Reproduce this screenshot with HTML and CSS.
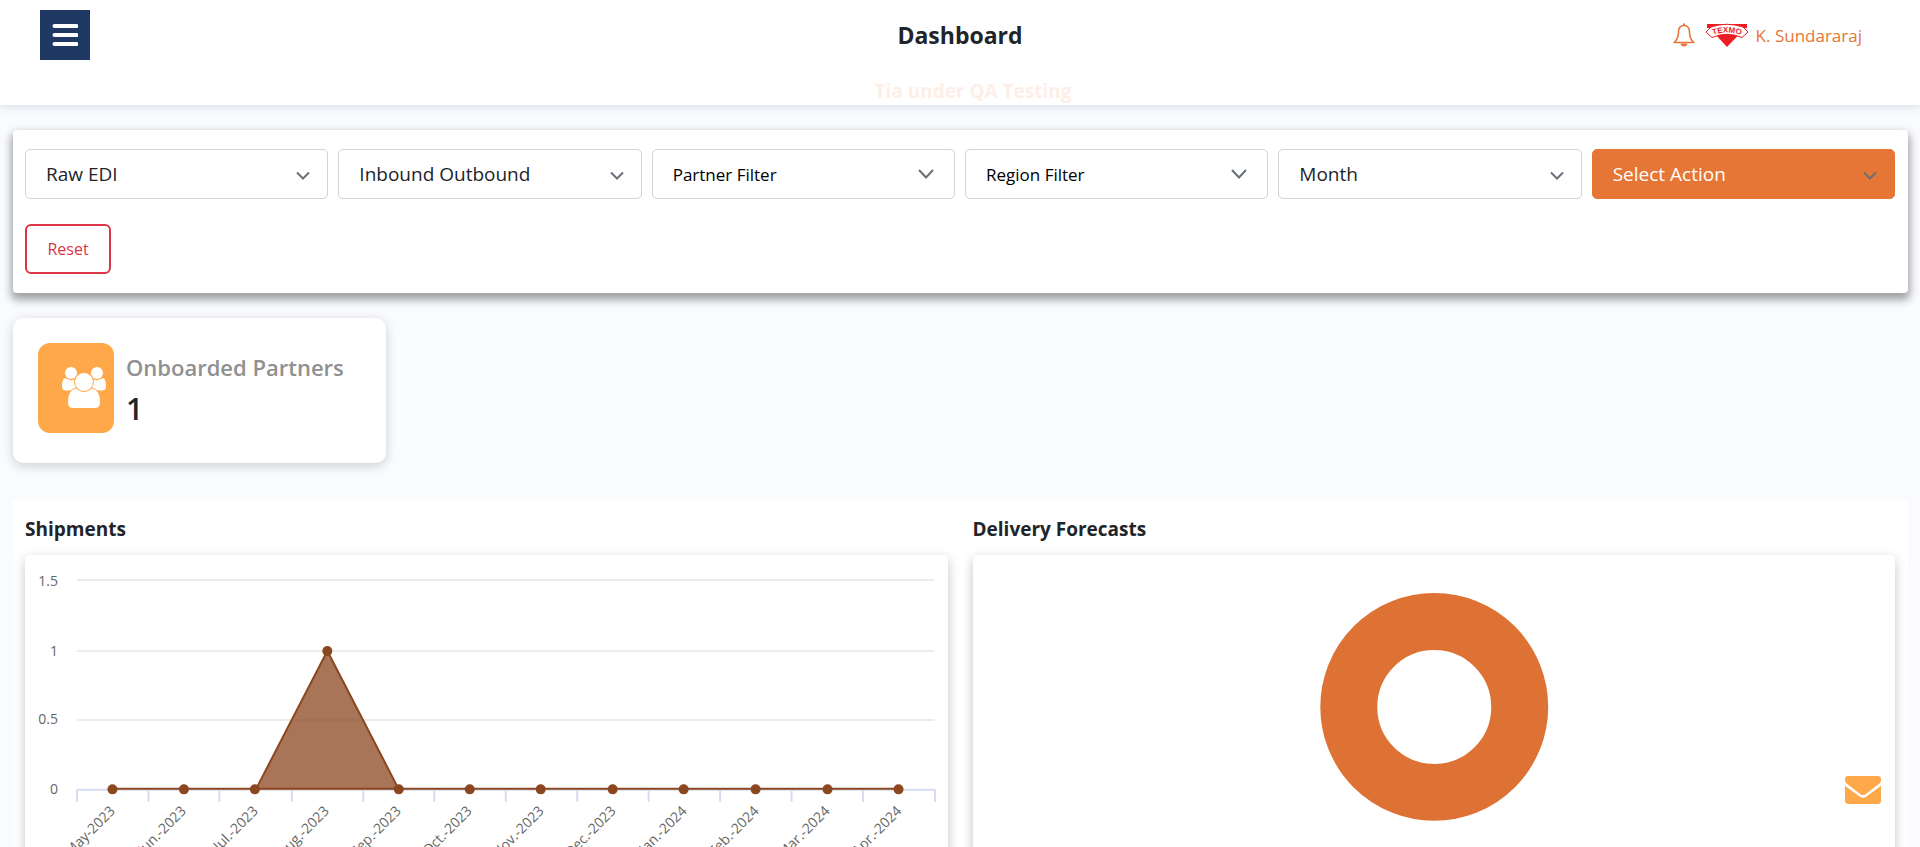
FILE: index.html
```html
<!DOCTYPE html>
<html lang="en">
<head>
<meta charset="utf-8">
<title>Dashboard</title>
<link rel="stylesheet" href="styles.css">
</head>
<body>
<header class="topbar">
  <div class="topbar-row">
    <button class="menu-btn" type="button" aria-label="Menu">
      <svg width="26" height="22" viewBox="0 0 26 22"><path d="M2.500 2H24.500M2.500 11H24.500M2.500 20H24.500" stroke="#fff" stroke-width="4" stroke-linecap="round"/></svg>
    </button>
    <h1 class="page-title">Dashboard</h1>
    <div class="user">
      <button class="bell" type="button" aria-label="Notifications">
        <svg width="22" height="24" viewBox="0 0 22 24" fill="none" stroke="#e67635" stroke-width="1.600" stroke-linejoin="round"><path d="M11 2.500C7 2.500 5.500 5.500 5.500 9C5.500 14 4 17 1.200 19.500H20.800C18 17 16.500 14 16.500 9C16.500 5.500 15 2.500 11 2.500Z"/><path d="M7.500 20.500H14.500C14.500 24.500 7.500 24.500 7.500 20.500Z" fill="#e67635" stroke="none"/><path d="M11 0.500V2.500" stroke-width="2"/></svg>
      </button>
      <svg class="brand" width="44" height="24" viewBox="0 0 44 24" role="img" aria-label="Texmo">
        <path d="M2 1H42V5H2ZM11 12Q22 8 33 12.500L22 24Z" fill="#ed1c24"/>
        <path id="arc" d="M5 13Q22 6 39 13" fill="none"/>
        <path d="M1 9L6 4Q22 -1.500 38 4L43 9L37 14.500Q22 8 7 14.500Z" fill="#fff" stroke="#ed1c24" stroke-width="1"/>
        <text class="brand-text"><textPath href="#arc" startOffset="50%" text-anchor="middle">TEXMO</textPath></text>
      </svg>
      <a class="user-name" href="#">K. Sundararaj</a>
    </div>
  </div>
  <p class="notice">Tia under QA Testing</p>
</header>
<main class="content">
  <form class="filters">
    <select class="control" aria-label="Document type"><option>Raw EDI</option></select>
    <select class="control" aria-label="Direction"><option>Inbound Outbound</option></select>
    <button class="control control-menu" type="button">Partner Filter</button>
    <button class="control control-menu" type="button">Region Filter</button>
    <select class="control" aria-label="Period"><option>Month</option></select>
    <select class="control control-action" aria-label="Action"><option>Select Action</option></select>
    <button class="reset" type="reset">Reset</button>
  </form>
  <section class="stat">
    <div class="stat-icon">
      <svg width="44" height="41" viewBox="0 0 44 41" fill="#fff" stroke="#ffa84a"><circle cx="9" cy="6" r="6" stroke="none"/><circle cx="35" cy="6" r="6" stroke="none"/><path d="M2.500 11Q9 15 15 11.500V23.500H4Q0 23.500 0 19.500Q0 13 2.500 11ZM41.500 11Q35 15 29 11.500V23.500H40Q44 23.500 44 19.500Q44 13 41.500 11Z" stroke="none"/><path d="M14 21Q22 27 30 21Q38.500 23 38.500 35Q38.500 41.500 33 41.500H11Q5.500 41.500 5.500 35Q5.500 23 14 21Z"/><circle cx="22" cy="15" r="9.500"/></svg>
    </div>
    <div>
      <h2 class="stat-label">Onboarded Partners</h2>
      <p class="stat-value">1</p>
    </div>
  </section>
  <div class="charts">
    <section>
      <h2 class="chart-title">Shipments</h2>
      <div class="panel">
        <svg class="area-chart" viewBox="0 0 923 330" role="img" aria-label="Shipments by month">
          <g class="grid"><path d="M52 25H910M52 96H910M52 165H910"/></g>
          <path class="axis" d="M52 235H911M52 235V247M123.500 235V247M194.500 235V247M267 235V247M338.500 235V247M409.500 235V247M481 235V247M552.500 235V247M624 235V247M695.500 235V247M767 235V247M838.500 235V247M910.500 235V247"/>
          <path class="area" d="M231 234.500L302.500 96L374 234.500Z"/>
          <path class="series-base" d="M87 234H874"/>
          <path class="series" d="M231 234.500L302.500 96L374 234.500"/>
          <g class="dots"><circle cx="87.500" cy="234.500" r="5"/><circle cx="159" cy="234.500" r="5"/><circle cx="230" cy="234.500" r="5"/><circle cx="302.500" cy="96" r="5"/><circle cx="374" cy="234.500" r="5"/><circle cx="445" cy="234.500" r="5"/><circle cx="516" cy="234.500" r="5"/><circle cx="588" cy="234.500" r="5"/><circle cx="659" cy="234.500" r="5"/><circle cx="731" cy="234.500" r="5"/><circle cx="803" cy="234.500" r="5"/><circle cx="874" cy="234.500" r="5"/></g>
          <g class="labels" text-anchor="end">
            <text x="33" y="31">1.5</text><text x="33" y="101">1</text><text x="33" y="169">0.5</text><text x="33" y="239">0</text>
            <text transform="translate(91 257) rotate(-45)">May-2023</text>
            <text transform="translate(162 257) rotate(-45)">Jun.-2023</text>
            <text transform="translate(234 257) rotate(-45)">Jul.-2023</text>
            <text transform="translate(305 257) rotate(-45)">Aug.-2023</text>
            <text transform="translate(377 257) rotate(-45)">Sep.-2023</text>
            <text transform="translate(448 257) rotate(-45)">Oct.-2023</text>
            <text transform="translate(520 257) rotate(-45)">Nov.-2023</text>
            <text transform="translate(592 257) rotate(-45)">Dec.-2023</text>
            <text transform="translate(663 257) rotate(-45)">Jan.-2024</text>
            <text transform="translate(735 257) rotate(-45)">Feb.-2024</text>
            <text transform="translate(806 257) rotate(-45)">Mar.-2024</text>
            <text transform="translate(878 257) rotate(-45)">Apr.-2024</text>
          </g>
        </svg>
      </div>
    </section>
    <section>
      <h2 class="chart-title">Delivery Forecasts</h2>
      <div class="panel">
        <svg class="donut-chart" viewBox="0 0 923 330" role="img" aria-label="Delivery forecasts"><circle cx="461.500" cy="152" r="85.500"/></svg>
      </div>
    </section>
  </div>
</main>
<button class="mail" type="button" aria-label="Messages">
  <svg width="36" height="28" viewBox="0 0 36 28" fill="#ffa84a"><path d="M3 0H33Q36 0 36 3V4Q36 6 34.500 7.500L20.500 18.200Q18 20 15.500 18.200L1.500 7.500Q0 6 0 4V3Q0 0 3 0Z"/><path d="M0 9.800L14.500 20.500Q18 23 21.500 20.500L36 9.800V24.500Q36 28 32.500 28H3.500Q0 28 0 24.500Z"/></svg>
</button>
</body>
</html>
```
FILE: styles.css
```css
* { box-sizing: border-box; }
html, body { height: 100%; overflow: hidden; }
body {
  margin: 0;
  background: #fafbff;
  color: #212529;
  font-family: "Segoe UI", "Open Sans", "Noto Sans", sans-serif;
  font-size: 19px;
}
h1, h2, p { margin: 0; }
button { padding: 0; border: 0; background: none; font: inherit; cursor: pointer; }
svg { display: block; }

.topbar { height: 105px; background: #fff; box-shadow: 0 1px 10px rgba(0, 0, 40, 0.14); }
.topbar-row {
  display: grid;
  grid-template-columns: 1fr auto 1fr;
  align-items: center;
  padding: 10px 58px 0 40px;
}
.menu-btn { display: grid; place-items: center; width: 50px; height: 50px; background: #203864; }
.page-title { font-size: 23px; font-weight: 700; line-height: 32px; margin-left: 18px; }
.user { display: flex; align-items: center; justify-content: flex-end; }
.brand { margin: 0 7px 0 10px; }
.brand-text { fill: #ed1c24; font: bold 8px "Liberation Sans", sans-serif; }
.user-name { color: #e67635; text-decoration: none; font-size: 17px; }
.notice { color: #fdeee6; font-weight: 700; text-align: center; line-height: 26px; padding: 18px 0 0 26px; }

.content { padding: 25px 12px 0 13px; }
.filters {
  display: grid;
  grid-template-columns: repeat(6, 1fr);
  gap: 25px 10px;
  padding: 19px 13px 19px 12px;
  background: #fff;
  border-radius: 4px;
  box-shadow: 0 5px 8px 2px rgba(0, 0, 0, 0.36);
}
.control {
  appearance: none;
  min-width: 0;
  height: 50px;
  padding: 0 20px;
  border: 1px solid #ced4da;
  border-radius: 5px;
  background: #fff url("data:image/svg+xml,%3Csvg xmlns='http://www.w3.org/2000/svg' width='16' height='10' fill='none' stroke='%23697079' stroke-width='2'%3E%3Cpath d='M2 1.500 8 7.500 14 1.500'/%3E%3C/svg%3E") no-repeat right 16px top 21px;
  color: #212529;
  font: inherit;
  text-align: left;
}
.control-menu {
  background-image: url("data:image/svg+xml,%3Csvg xmlns='http://www.w3.org/2000/svg' width='16' height='10' fill='none' stroke='%23697079' stroke-width='2'%3E%3Cpath d='M1 1 8 8.500 15 1'/%3E%3C/svg%3E");
  background-position: right 20px top 19px;
  color: #000;
  font-size: 17px;
}
.control-action { background-color: #e67635; border-color: #e67635; color: #fff; }
.reset {
  justify-self: start;
  width: 86px;
  height: 50px;
  border: 2px solid #dc3545;
  border-radius: 6px;
  color: #dc3545;
  font-size: 16px;
}

.stat {
  display: flex;
  gap: 12px;
  width: 373px;
  margin-top: 25px;
  padding: 25px 25px 29px;
  border-radius: 10px;
  background: #fff;
  box-shadow: 0 3px 12px rgba(0, 0, 0, 0.18);
}
.stat-icon { width: 76px; height: 90px; padding: 24px 0 0 24px; border-radius: 12px; background: #ffa84a; }
.stat-label { padding-top: 8px; color: #909090; font-size: 22px; font-weight: 600; line-height: 33px; }
.stat-value { font-size: 30px; font-weight: 600; line-height: 50px; }

.charts {
  display: grid;
  grid-template-columns: 1fr 1fr;
  gap: 25px;
  margin-top: 36px;
  padding: 14px 13px 25px 12px;
  background: #fff;
}
.chart-title { font-size: 19px; font-weight: 700; line-height: 32px; margin-bottom: 10px; }
.panel { border-radius: 5px; background: #fff; box-shadow: 0 4px 12px rgba(0, 0, 0, 0.24); }
.area-chart, .donut-chart { width: 100%; }
.grid { stroke: #ececec; stroke-width: 2; }
.axis { fill: none; stroke: #d5dcf0; stroke-width: 2; }
.area { fill: #8b4720; fill-opacity: 0.75; }
.series { fill: none; stroke: #8b4720; stroke-width: 2; }
.series-base { stroke: #8b4720; stroke-width: 2; }
.dots { fill: #8b4720; }
.labels { fill: #666; font-size: 14px; }
.donut-chart { fill: none; stroke: #dd7234; stroke-width: 57; }

.mail { position: fixed; right: 39px; bottom: 43px; }
```
